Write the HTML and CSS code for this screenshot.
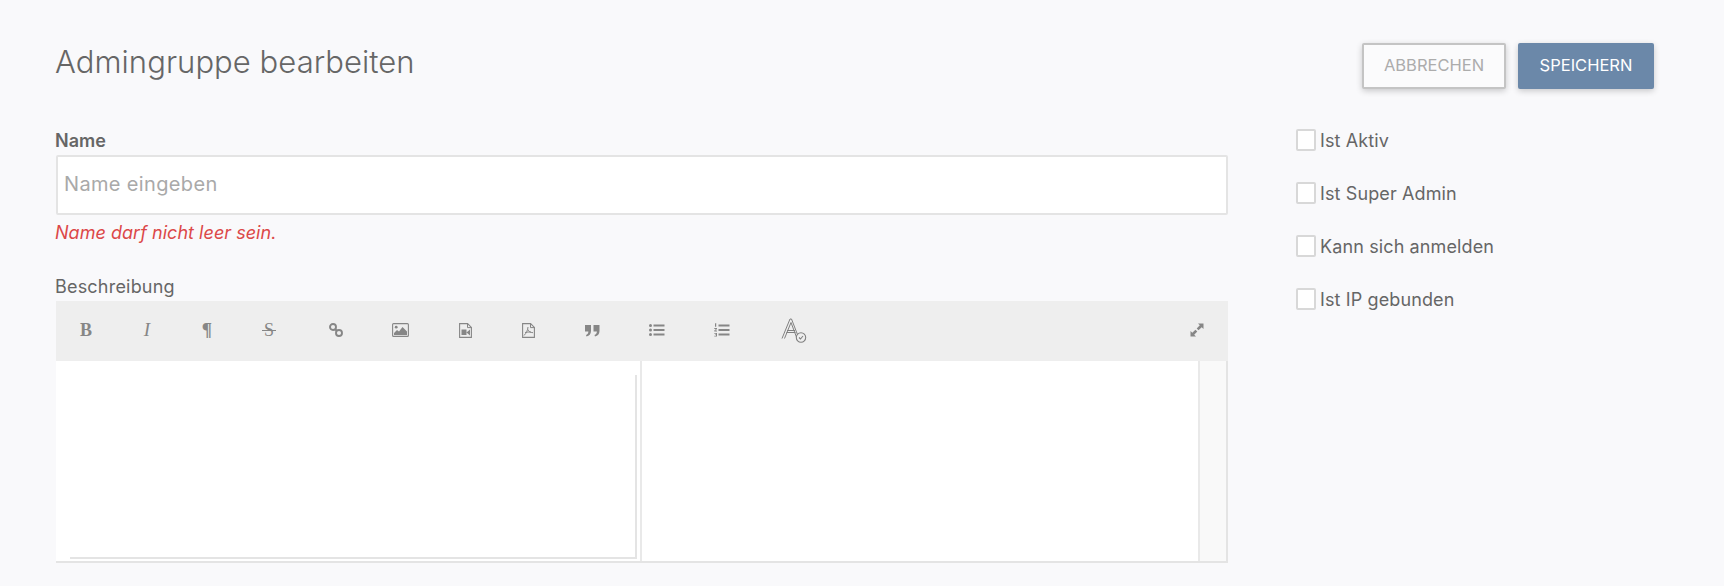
FILE: index.html
```html
<!DOCTYPE html>
<html lang="de">
<head>
    <meta charset="UTF-8">
    <meta name="viewport" content="width=device-width, initial-scale=1.0">
    <title>Admingruppe bearbeiten</title>
    <link rel="stylesheet" href="styles.css">
</head>
<body>
    <div class="page">
        <div class="header">
            <h1>Admingruppe bearbeiten</h1>
            <div class="actions">
                <button class="btn btn-cancel">ABBRECHEN</button>
                <button class="btn btn-save">SPEICHERN</button>
            </div>
        </div>
        <div class="content">
            <div class="main-col">
                <label class="label-strong" for="name">Name</label>
                <input type="text" id="name" class="text-input" placeholder="Name eingeben">
                <p class="error">Name darf nicht leer sein.</p>
                <div class="label-plain">Beschreibung</div>
                <div class="editor">
                    <div class="toolbar">
                        <span class="tool tool-text tool-bold">B</span>
                        <span class="tool tool-text tool-italic">I</span>
                        <span class="tool tool-text tool-para">¶</span>
                        <span class="tool tool-text"><span class="strike">S</span></span>
                        <span class="tool">
                            <svg width="16" height="16" viewBox="0 0 16 16" fill="none" stroke="#868686" stroke-width="1.9"><circle cx="5" cy="5" r="3"/><circle cx="11" cy="11" r="3"/><path d="M7 7l2 2"/></svg>
                        </span>
                        <span class="tool">
                            <svg width="17" height="14" viewBox="0 0 17 14"><rect x=".6" y=".6" width="15.8" height="12.8" rx="1" fill="none" stroke="#868686" stroke-width="1.1"/><circle cx="4.2" cy="4.2" r="1.4" fill="#868686"/><path d="M2 12V10l3-3 2 1.5L10.500 4 15 8.500V12z" fill="#868686"/></svg>
                        </span>
                        <span class="tool">
                            <svg width="13" height="15" viewBox="0 0 13 15"><path d="M.6.6h8l3.800 3.800v10H.6z" fill="none" stroke="#868686" stroke-width="1.100"/><path d="M8.500.6v4h4" fill="none" stroke="#868686"/><path d="M2.500 6.500h5v5.500h-5zM7.500 9.500L11 6.500v6z" fill="#868686"/></svg>
                        </span>
                        <span class="tool">
                            <svg width="13" height="15" viewBox="0 0 13 15" fill="none" stroke="#868686"><path d="M.6.6h8l3.800 3.800v10H.6z" stroke-width="1.100"/><path d="M8.500.6v4h4"/><path d="M6 4c-.3 3-1.500 6-4 8.500M6 6.500c.8 2 2.200 3 5 3.200M3 9.500c2-.5 4-.7 6-.4"/></svg>
                        </span>
                        <span class="tool">
                            <svg width="15" height="13" viewBox="0 0 15 13" fill="#868686"><path d="M0 1h6v6c0 3-1.800 5-4.500 5.500L1 11c1.500-.5 2.300-1.500 2.400-3.500H0zM8.500 1h6v6c0 3-1.800 5-4.500 5.500L9.500 11c1.500-.5 2.300-1.500 2.400-3.500H8.500z"/></svg>
                        </span>
                        <span class="tool">
                            <svg width="16" height="12" viewBox="0 0 16 12" fill="#868686"><circle cx="1.500" cy="1.500" r="1.500"/><circle cx="1.500" cy="6" r="1.500"/><circle cx="1.500" cy="10.500" r="1.500"/><rect x="4.500" y=".5" width="11" height="2"/><rect x="4.500" y="5" width="11" height="2"/><rect x="4.500" y="9.500" width="11" height="2"/></svg>
                        </span>
                        <span class="tool">
                            <svg width="16" height="14" viewBox="0 0 16 14" fill="#868686"><path d="M1 .5L2.200 0v3.800H1zM.3 5h2.700v1L1.300 7.500H3v1H.3v-1L2 6H.3zM.3 10H3v3.500H.3v-.8h1.700v-.6H1v-.7h1v-.6H.3z"/><rect x="4.500" y="1.500" width="11" height="2"/><rect x="4.500" y="6" width="11" height="2"/><rect x="4.500" y="10.500" width="11" height="2"/></svg>
                        </span>
                        <span class="tool">
                            <svg width="26" height="27" viewBox="0 0 26 26" fill="none" stroke="#808080"><path d="M1 21L9 1.500h1.500L18 21M3.500 21L10 5l6 16M5.500 15h9M6 13h8" stroke-width="1"/><circle cx="20" cy="20" r="4.700" fill="#eee" stroke-width="1.100"/><path d="M18 20l1.500 1.500 2.500-3" stroke-width="1.100"/></svg>
                        </span>
                        <span class="tool-spacer"></span>
                        <span class="tool">
                            <svg width="14" height="14" viewBox="0 0 14 14" fill="#868686"><path d="M8 .5h5.500V6l-1.800-1.800L8.500 7.300 6.700 5.500 9.800 2.300zM.5 8l1.800 1.800 3.100-3.100 1.900 1.800-3.100 3.200L6 13.500H.5z"/></svg>
                        </span>
                    </div>
                    <div class="editor-body">
                        <div class="pane-left">
                            <div class="pane-inner"></div>
                        </div>
                        <div class="pane-right"></div>
                        <div class="pane-gutter"></div>
                    </div>
                </div>
            </div>
            <div class="side-col">
                <label class="check"><span class="box"></span>Ist Aktiv</label>
                <label class="check"><span class="box"></span>Ist Super Admin</label>
                <label class="check"><span class="box"></span>Kann sich anmelden</label>
                <label class="check"><span class="box"></span>Ist IP gebunden</label>
            </div>
        </div>
    </div>
</body>
</html>
```

FILE: styles.css
```css
* {
    box-sizing: border-box;
}
body {
    margin: 0;
    background-color: #f9f9fb;
    color: #666;
    font-family: "Inter", "Noto Sans", sans-serif;
    font-size: 18px;
}
.page {
    height: 586px;
    padding: 43px 70px 0 55px;
    overflow: hidden;
}
.header {
    display: flex;
    justify-content: space-between;
    height: 46px;
}
h1 {
    margin: 0;
    font-size: 31px;
    font-weight: 300;
    letter-spacing: 0.05px;
    line-height: 38px;
    color: #666;
}
.actions {
    display: flex;
    gap: 12px;
}
.btn {
    height: 46px;
    padding: 0 0 2px;
    border-radius: 2px;
    font-family: inherit;
    font-size: 16.5px;
    box-shadow: 0 2px 6px rgba(0, 0, 0, 0.2);
}
.btn-cancel {
    width: 144px;
    background: #fbfbfc;
    border: 2px solid #c4c4c4;
    color: #acacac;
}
.btn-save {
    width: 136px;
    background: #6b88a9;
    border: none;
    color: #fff;
}
.content {
    display: flex;
    margin-top: 41px;
}
.main-col {
    width: 1173px;
}
.label-strong {
    display: block;
    padding-top: 1px;
    font-weight: 600;
    font-size: 18px;
    line-height: 20px;
    margin-bottom: 4px;
}
.text-input {
    display: block;
    width: 1172px;
    height: 60px;
    margin-left: 1px;
    padding: 0 6px 2px;
    background: #fff;
    border: 2px solid #e4e4e4;
    border-radius: 2px;
    font-family: inherit;
    font-size: 20px;
    letter-spacing: 0.35px;
    outline: none;
}
.text-input::placeholder {
    color: #a9a9a9;
}
.error {
    margin: 7px 0 0;
    color: #dc4848;
    font-style: italic;
    font-size: 18px;
    letter-spacing: 0.03px;
    line-height: 22px;
}
.label-plain {
    margin-top: 33px;
    letter-spacing: 0.2px;
    line-height: 20px;
}
.editor {
    margin-left: 1px;
    margin-top: 4px;
    width: 1172px;
}
.toolbar {
    display: grid;
    grid-template-columns: 60px 62px 58px 66px 68px 60px 70px 56px 72px 58px 72px 71px 1fr 62px;
    height: 60px;
    background: #eee;
}
.tool {
    display: flex;
    align-items: center;
    justify-content: center;
    padding-bottom: 2px;
    color: #868686;
}
.tool-text {
    font-family: "Liberation Serif", serif;
    font-size: 19px;
}
.tool-bold {
    font-size: 18px;
    font-weight: bold;
}
.tool-italic {
    font-style: italic;
}
.tool-para {
    font-weight: bold;
}
.strike {
    position: relative;
    font-size: 18px;
}
.strike::after {
    content: "";
    position: absolute;
    left: -2px;
    right: -2px;
    top: 50%;
    height: 1px;
    background: #868686;
}
.editor-body {
    display: flex;
    height: 202px;
    background: #fff;
    border-bottom: 2px solid #e4e4e4;
}
.pane-left {
    width: 586px;
    padding: 14px 3px 2px 14px;
    border-right: 2px solid #e9e9e9;
}
.pane-inner {
    height: 100%;
    border-right: 2px solid #e4e4e4;
    border-bottom: 2px solid #e4e4e4;
}
.pane-right {
    flex: 1;
    border-right: 2px solid #e9e9e9;
}
.pane-gutter {
    width: 28px;
    background: #f9f9f9;
    border-right: 2px solid #e4e4e4;
}
.side-col {
    margin-left: 68px;
    margin-top: -1px;
}
.check {
    display: flex;
    align-items: center;
    height: 22px;
    margin-bottom: 31px;
    letter-spacing: 0.12px;
    color: #666;
}
.box {
    width: 20px;
    height: 22px;
    margin-right: 4px;
    background: #fff;
    border: 2px solid #d8d8d8;
    border-radius: 2px;
}
```
